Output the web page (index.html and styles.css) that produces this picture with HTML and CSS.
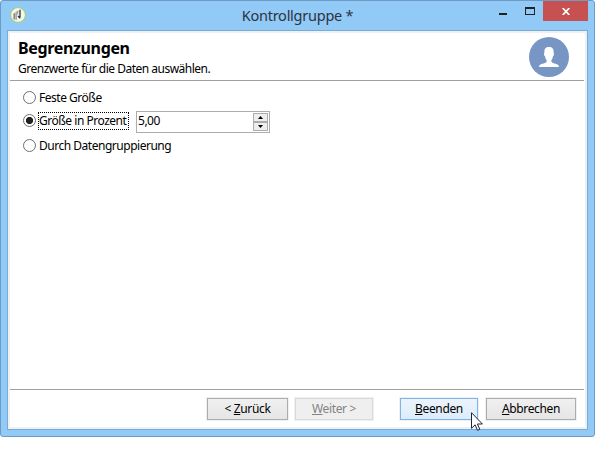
FILE: index.html
```html
<!DOCTYPE html>
<html lang="de">
<head>
<meta charset="utf-8">
<title>Kontrollgruppe</title>
<link rel="stylesheet" href="styles.css">
</head>
<body>
<div class="window">
  <header class="titlebar">
    <svg class="app-icon" width="16" height="16" viewBox="0 0 16 16">
      <circle cx="8" cy="8" r="7.400" fill="#f4f6f0" stroke="#a5cf5c"/>
      <path d="M3.400 6.800 5.400 5.600v7.400l-2-1z" fill="#8b8b86"/>
      <path d="M5.600 5 8.400 3.200v3L7 8.400V13l-1.400-.6z" fill="#a9a9a5"/>
      <path d="M10 2.800v7.400M8 9l2.200 2.200" fill="none" stroke="#333" stroke-width="1.300"/>
    </svg>
    <h1 class="title">Kontrollgruppe *</h1>
    <div class="controls">
      <span class="minimize"></span>
      <span class="maximize"></span>
      <span class="close"><svg width="8" height="7" viewBox="0 0 8 7"><path d="M.7 0 7.300 7M7.300 0 .7 7" stroke="#fff" stroke-width="1.700"/></svg></span>
    </div>
  </header>
  <main class="client">
    <section class="heading">
      <div>
        <h2>Begrenzungen</h2>
        <p>Grenzwerte für die Daten auswählen.</p>
      </div>
      <svg class="avatar" width="40" height="40" viewBox="0 0 40 40">
        <circle cx="20" cy="20" r="20" fill="#7796c4"/>
        <path d="M20 10c3.400 0 4.800 2 4.600 5l.4 2c0 1.200-.4 1.800-1 2.200-.3 2-1 3-1.600 4v1.600c1.200 2.600 7.600 1.200 7.600 5.200H10c0-4 6.400-2.600 7.600-5.200v-1.600c-.6-1-1.300-2-1.600-4-.6-.4-1-1-1-2.200l.4-2c-.2-3 1.200-5 4.600-5z" fill="#fff"/>
      </svg>
    </section>
    <section class="options">
      <label class="option"><i class="radio"></i><span>Feste Größe</span></label>
      <div class="option percent">
        <i class="radio checked"></i><span class="focus">Größe in Prozent</span>
        <div class="spinner"><span class="value">5,00</span>
          <div class="steps">
            <b><svg width="5" height="3" viewBox="0 0 5 3"><path d="M0 3 2.500 0 5 3z"/></svg></b>
            <b><svg width="5" height="3" viewBox="0 0 5 3"><path d="M0 0 2.500 3 5 0z"/></svg></b>
          </div>
        </div>
      </div>
      <label class="option"><i class="radio"></i><span>Durch Datengruppierung</span></label>
    </section>
    <footer class="buttons">
      <span class="button back"><span>&lt; <u>Z</u>urück</span></span>
      <span class="button next"><span><u>W</u>eiter &gt;</span></span>
      <span class="button finish"><span><u>B</u>eenden</span></span>
      <span class="button cancel"><span><u>A</u>bbrechen</span></span>
    </footer>
  </main>
  <svg class="cursor" width="12" height="19" viewBox="0 0 12 19"><path d="M.5.700v15.600l3.600-3.500 2.400 5.500 2.300-1-2.400-5.300h5z" fill="#fff" stroke="#222238"/></svg>
</div>
</body>
</html>
```
FILE: styles.css
```css
* { box-sizing: border-box; }
body {
  margin: 0;
  background: #fff;
  color: #000;
  font: 12px/16px "Noto Sans", "Open Sans", sans-serif;
}
.window {
  position: relative;
  display: flex;
  flex-direction: column;
  width: 595px;
  height: 437px;
  padding: 0 6px 6px;
  background: #91c9f7;
  border: 1px solid #6d9bc3;
  border-radius: 3px;
}
.titlebar {
  display: grid;
  grid-template-columns: 100px 1fr 100px;
  height: 29px;
  flex: none;
}
.app-icon { margin: 6px 0 0 3px; }
.title {
  margin: 4px 0 0;
  text-align: center;
  white-space: nowrap;
  font-weight: 400;
  font-size: 14.5px;
  letter-spacing: -.25px;
  line-height: 21px;
  color: #2b3440;
}
.controls { display: flex; justify-content: flex-end; }
.minimize { width: 8px; height: 2px; margin-top: 12px; background: #222; }
.maximize { width: 10px; height: 8px; margin: 6px 8px 0 18px; border: 1px solid #222; border-top-width: 2px; }
.close {
  display: flex;
  align-items: center;
  justify-content: center;
  width: 45px;
  height: 20px;
  background: #c75050;
}
.client {
  flex: 1;
  display: flex;
  flex-direction: column;
  border: 1px solid #77abd8;
  outline: 2px solid #f0f0f0;
  outline-offset: -3px;
  background: #fff;
  padding: 2px 3px 2px 2px;
}
.heading {
  display: flex;
  justify-content: space-between;
  height: 48px;
  padding: 4px 15px 0 8px;
  border-bottom: 1px solid #a0a0a0;
}
.heading h2 { margin: 1px 0 0; font-size: 16px; line-height: 20px; letter-spacing: -.35px; }
.heading p { margin: 3px 0 0; letter-spacing: -.5px; }
.options { flex: 1; padding: 9px 0 0 13px; }
.option { display: flex; align-items: center; height: 16px; letter-spacing: -.48px; white-space: nowrap; }
.radio {
  flex: none;
  width: 13px;
  height: 13px;
  margin: 0 3px 1px 0;
  border: 1px solid #707070;
  border-radius: 50%;
}
.checked { margin-bottom: 3px; background: radial-gradient(circle, #222 3.3px, #fff 3.9px); }
.percent { height: 22px; margin: 5px 0 5px; }
.focus { width: 89px; margin-top: -2px; outline: 1px dotted #000; }
.spinner {
  display: flex;
  justify-content: space-between;
  width: 134px;
  height: 22px;
  border: 1px solid #abadb3;
  margin-left: 8px;
  padding: 1px;
}
.steps { display: flex; flex-direction: column; width: 15px; }
.steps b {
  flex: 1;
  display: flex;
  align-items: center;
  justify-content: center;
  border: 1px solid #acacac;
  background: #eee;
}
.buttons {
  display: flex;
  height: 38px;
  padding: 8px 8px 0 0;
  justify-content: flex-end;
  border-top: 1px solid #a0a0a0;
}
.button {
  display: flex;
  align-items: center;
  justify-content: center;
  height: 22px;
  border: 1px solid #acacac;
  box-shadow: 0 0 0 1px #f0f0f0;
  background: linear-gradient(#f0f0f0, #e5e5e5);
  letter-spacing: -.35px;
}
.back { width: 81px; }
.next { width: 78px; margin-left: 7px; color: #838383; border-color: #d9d9d9; background: #efefef; }
.finish { width: 78px; margin-left: 27px; border-color: #7eb4ea; background: linear-gradient(#ecf4fc, #dcecfc); }
.cancel { width: 90px; margin-left: 8px; }
.cursor { position: absolute; left: 470px; top: 411px; }
```
